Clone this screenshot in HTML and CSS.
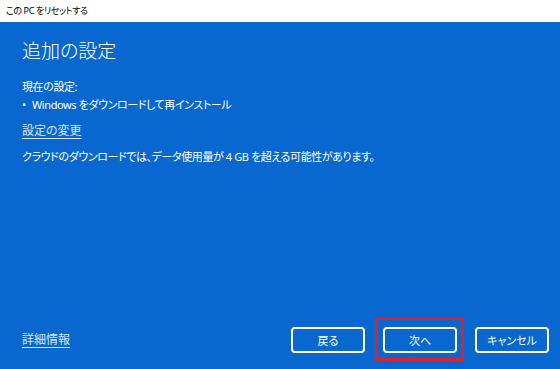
FILE: index.html
```html
<!DOCTYPE html>
<html lang="ja">
<head>
  <meta charset="UTF-8">
  <title>この PC をリセットする</title>
  <link rel="stylesheet" href="styles.css">
</head>
<body>
  <div class="titlebar">この PC をリセットする</div>
  <main class="panel">
    <h1>追加の設定</h1>
    <p class="line current">現在の設定:</p>
    <p class="line"><span class="bullet">•</span>Windows をダウンロードして再インストール</p>
    <a class="link change" href="#">設定の変更</a>
    <p class="line">クラウドのダウンロードでは、データ使用量が 4 GB を超える可能性があります。</p>

    <div class="footer">
      <a class="link" href="#">詳細情報</a>
      <div class="buttons">
        <button type="button">戻る</button>
        <span class="marked"><button type="button">次へ</button></span>
        <button type="button">キャンセル</button>
      </div>
    </div>
  </main>
</body>
</html>
```

FILE: styles.css
```css
html, body { margin: 0; padding: 0; }
body { width: 560px; height: 369px; overflow: hidden; font-family: "Noto Sans", "Noto Sans CJK JP", sans-serif; font-feature-settings: "palt"; }
.titlebar { height: 22px; line-height: 22px; padding-left: 6px; font-size: 9px; letter-spacing: -0.4px; color: #000; background: #fff; }
.panel { height: 347px; box-sizing: border-box; padding: 0 11px 16px 22px; background: #0868d0; color: #fff; display: flex; flex-direction: column; align-items: flex-start; }
h1 { font-size: 19px; font-weight: 300; line-height: 28px; margin: 15px 0 0; }
.line { font-size: 11px; line-height: 18px; letter-spacing: -0.4px; margin: 0; }
.current { margin-top: 13px; }
.bullet { display: inline-block; width: 10px; }
.link { font-size: 12px; line-height: 18px; color: #d6e4fa; text-decoration: underline; text-underline-offset: 3px; }
.change { margin: 8px 0 8px; }
.footer { margin-top: auto; align-self: stretch; display: flex; align-items: center; justify-content: space-between; }
.buttons { display: flex; gap: 18px; }
button { width: 74px; height: 26px; padding: 0; border: 2px solid #fff; border-radius: 4px; background: transparent; color: #fff; font-family: inherit; font-size: 11px; font-feature-settings: "palt"; }
.marked { position: relative; display: flex; }
.marked::after { content: ""; position: absolute; top: -10px; right: -7px; bottom: -8px; left: -8px; border: 3px solid #e0202a; }
```
